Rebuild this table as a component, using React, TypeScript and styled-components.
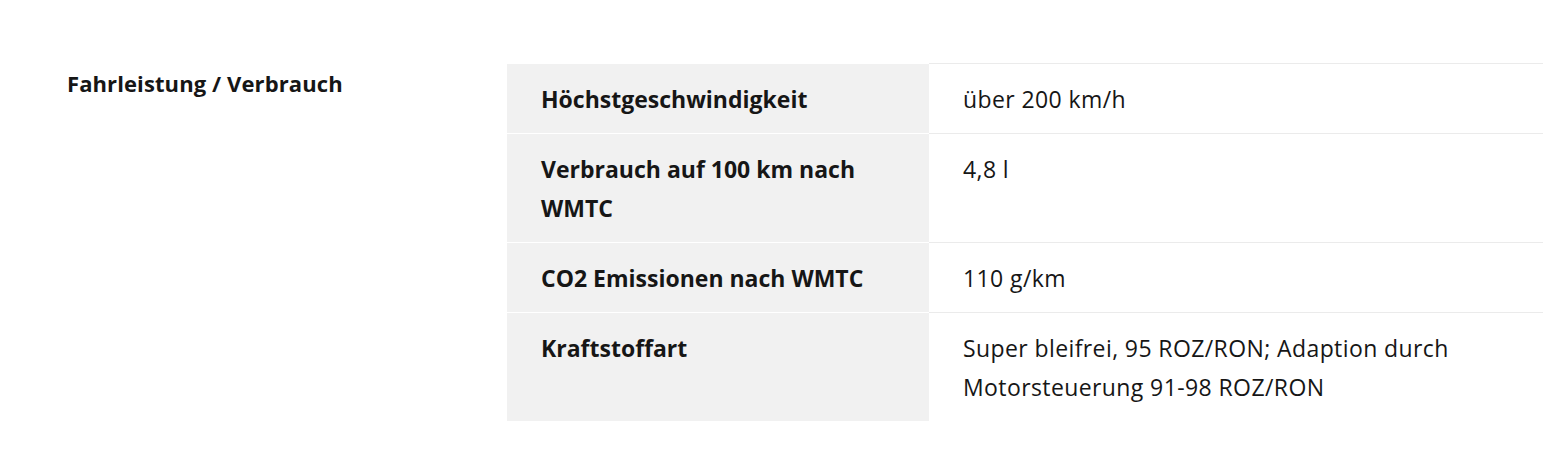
import React from "react";
import styled, { createGlobalStyle } from "styled-components";

const Global = createGlobalStyle`
  html, body { margin: 0; padding: 0; background: #ffffff; }
  body { font-family: "Open Sans", "Noto Sans", sans-serif; color: #161616; }
`;

const Section = styled.section`
  display: grid;
  grid-template-columns: 440px 1fr;
  padding: 63px 0 48px 67px;
`;

const Heading = styled.h3`
  margin: 0;
  font-size: 22px;
  font-weight: 700;
  letter-spacing: 0.1px;
  line-height: 40px;
  color: #161616;
`;

const Table = styled.table`
  width: 100%;
  border-collapse: collapse;
  border-spacing: 0;
`;

const Row = styled.tr``;

const Label = styled.th`
  width: 422px;
  box-sizing: border-box;
  background: #f1f1f1;
  border-top: 1px solid #ffffff;
  padding: 16px 34px 14px;
  text-align: left;
  vertical-align: top;
  font-size: 23px;
  font-weight: 700;
  line-height: 39px;
  color: #161616;
`;

const Value = styled.td`
  border-top: 1px solid #ebebeb;
  padding: 16px 34px 14px;
  vertical-align: top;
  font-size: 23px;
  font-weight: 400;
  letter-spacing: 0.4px;
  line-height: 39px;
  color: #161616;
`;

const rows: [string, React.ReactNode][] = [
  ["Höchstgeschwindigkeit", "über 200 km/h"],
  ["Verbrauch auf 100 km nach WMTC", "4,8 l"],
  ["CO2 Emissionen nach WMTC", "110 g/km"],
  [
    "Kraftstoffart",
    <>
      Super bleifrei, 95 ROZ/RON; Adaption durch
      <br />
      Motorsteuerung 91-98 ROZ/RON
    </>,
  ],
];

export default function App() {
  return (
    <>
      <Global />
      <Section>
        <Heading>Fahrleistung / Verbrauch</Heading>
        <Table>
          <tbody>
            {rows.map(([k, v], i) => (
              <Row key={i}>
                <Label scope="row">{k}</Label>
                <Value>{v}</Value>
              </Row>
            ))}
          </tbody>
        </Table>
      </Section>
    </>
  );
}
